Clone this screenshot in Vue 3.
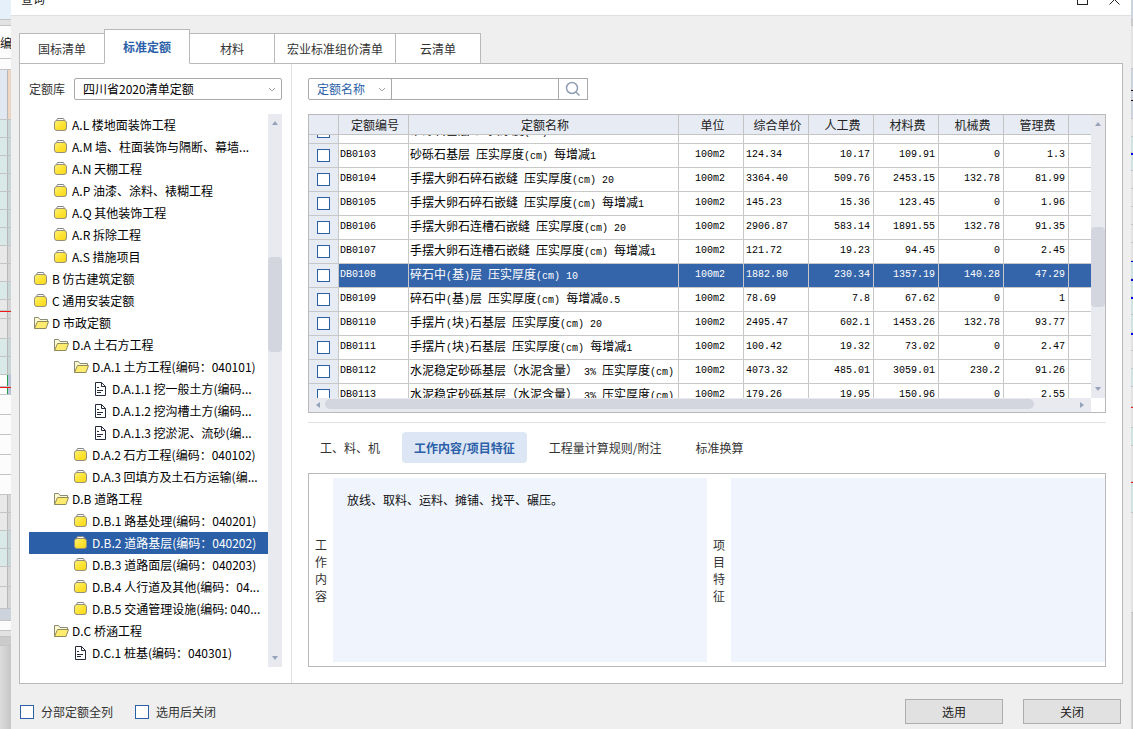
<script setup>
import { ref, onMounted } from 'vue'

const tabs = ['国标清单', '标准定额', '材料', '宏业标准组价清单', '云清单']
const activeTab = ref(1)

const tree = [
  { level: 1, icon: 'closed', text: 'A.L 楼地面装饰工程' },
  { level: 1, icon: 'closed', text: 'A.M 墙、柱面装饰与隔断、幕墙...' },
  { level: 1, icon: 'closed', text: 'A.N 天棚工程' },
  { level: 1, icon: 'closed', text: 'A.P 油漆、涂料、裱糊工程' },
  { level: 1, icon: 'closed', text: 'A.Q 其他装饰工程' },
  { level: 1, icon: 'closed', text: 'A.R 拆除工程' },
  { level: 1, icon: 'closed', text: 'A.S 措施项目' },
  { level: 0, icon: 'closed', text: 'B 仿古建筑定额' },
  { level: 0, icon: 'closed', text: 'C 通用安装定额' },
  { level: 0, icon: 'open', text: 'D 市政定额' },
  { level: 1, icon: 'open', text: 'D.A 土石方工程' },
  { level: 2, icon: 'open', text: 'D.A.1 土方工程(编码：040101)' },
  { level: 3, icon: 'doc', text: 'D.A.1.1 挖一般土方(编码...' },
  { level: 3, icon: 'doc', text: 'D.A.1.2 挖沟槽土方(编码...' },
  { level: 3, icon: 'doc', text: 'D.A.1.3 挖淤泥、流砂(编...' },
  { level: 2, icon: 'closed', text: 'D.A.2 石方工程(编码：040102)' },
  { level: 2, icon: 'closed', text: 'D.A.3 回填方及土石方运输(编...' },
  { level: 1, icon: 'open', text: 'D.B 道路工程' },
  { level: 2, icon: 'closed', text: 'D.B.1 路基处理(编码：040201)' },
  { level: 2, icon: 'closed', text: 'D.B.2 道路基层(编码：040202)' },
  { level: 2, icon: 'closed', text: 'D.B.3 道路面层(编码：040203)' },
  { level: 2, icon: 'closed', text: 'D.B.4 人行道及其他(编码：04...' },
  { level: 2, icon: 'closed', text: 'D.B.5 交通管理设施(编码: 040...' },
  { level: 1, icon: 'open', text: 'D.C 桥涵工程' },
  { level: 2, icon: 'doc', text: 'D.C.1 桩基(编码：040301)' },
]
const selectedNode = ref(19)

const heads = ['定额编号', '定额名称', '单位', '综合单价', '人工费', '材料费', '机械费', '管理费']
const rows = [
  ['DB0102', '砂砾石基层 压实厚度(cm) 20', '2456.20', '203.35', '2198.12', '0', '26'],
  ['DB0103', '砂砾石基层 压实厚度(cm) 每增减1', '124.34', '10.17', '109.91', '0', '1.3'],
  ['DB0104', '手摆大卵石碎石嵌缝 压实厚度(cm) 20', '3364.40', '509.76', '2453.15', '132.78', '81.99'],
  ['DB0105', '手摆大卵石碎石嵌缝 压实厚度(cm) 每增减1', '145.23', '15.36', '123.45', '0', '1.96'],
  ['DB0106', '手摆大卵石连槽石嵌缝 压实厚度(cm) 20', '2906.87', '583.14', '1891.55', '132.78', '91.35'],
  ['DB0107', '手摆大卵石连槽石嵌缝 压实厚度(cm) 每增减1', '121.72', '19.23', '94.45', '0', '2.45'],
  ['DB0108', '碎石中(基)层 压实厚度(cm) 10', '1882.80', '230.34', '1357.19', '140.28', '47.29'],
  ['DB0109', '碎石中(基)层 压实厚度(cm) 每增减0.5', '78.69', '7.8', '67.62', '0', '1'],
  ['DB0110', '手摆片(块)石基层 压实厚度(cm) 20', '2495.47', '602.1', '1453.26', '132.78', '93.77'],
  ['DB0111', '手摆片(块)石基层 压实厚度(cm) 每增减1', '100.42', '19.32', '73.02', '0', '2.47'],
  ['DB0112', '水泥稳定砂砾基层（水泥含量） 3% 压实厚度(cm)', '4073.32', '485.01', '3059.01', '230.2', '91.26'],
  ['DB0113', '水泥稳定砂砾基层（水泥含量） 3% 压实厚度(cm)', '179.26', '19.95', '150.96', '0', '2.55'],
]
const selectedRow = ref(6)

// Splits a name into half-width and full-width runs so each gets its own face.
const runs = (s) => s.match(/[\x20-\x7e]+|[^\x20-\x7e]+/g).map((t) => ({ t, half: t.charCodeAt(0) < 127 }))

const subTabs = ['工、料、机', '工作内容/项目特征', '工程量计算规则/附注', '标准换算']
const activeSub = ref(1)
const workText = ref('放线、取料、运料、摊铺、找平、碾压。')

const scroller = ref(null)
onMounted(() => { scroller.value.scrollTop = 15 })

// Slices of the workbook window visible on either side of the dialog.
const leftEdge = [
  [20, 'ribbon'], [6, 'dim'], [33, 'caption'], [11, 'white'], [50, 'head'],
  ...Array(7).fill([18, 'teal']), [18, 'grey'], [18, 'grey'], [18, 'teal'], [11, 'grey'], [1, 'red'], [7, 'grey'], [20, 'grey'],
  [18, 'teal'], [18, 'teal'], [12, 'cell'], [1, 'red'], [7, 'cell'],
  ...Array(5).fill([20, 'white']), [18, 'grey'], [18, 'grey'], [18, 'teal'], [18, 'teal'], [20, 'grey'], [22, 'grey'],
  [12, 'bar'], [10, 'white'], [6, 'dim'], [9, 'dark'], [84, 'foot'],
]
const rightEdge = [
  [20, 'bar'], [6, 'dark'], [43, 'dim'], [21, 'bar'], [1, 'ink'], [9, 'bar'], [1, 'ink'], [18, 'bar'], [18, 'dim'], [16, 'teal'],
  [2, 'blue'], [16, 'teal'], ...Array(5).fill([18, 'dim']), [1, 'blue'], [17, 'teal'], [2, 'blue'], [16, 'teal'], [2, 'blue'], [16, 'teal'],
  [18, 'teal'], [2, 'blue'], [16, 'dim'], [18, 'dim'], [18, 'teal'], [20, 'dim'], [1, 'red'], [20, 'dim'], [18, 'teal'],
  [36, 'dim'], [1, 'red'], [30, 'teal'], [100, 'dim'], [120, 'foot'],
]
</script>

<template>
  <div class="desktop">
    <div class="edge left">
      <div v-for="(s, i) in leftEdge" :key="i" :class="['slice', s[1]]" :style="{ height: s[0] + 'px' }">
        <span v-if="s[1] === 'caption'">编制</span>
      </div>
    </div>

    <section class="dialog">
      <header class="titlebar">
        <div class="title-row">
          <span>查询</span>
          <div class="win-buttons">
            <button aria-label="最大化"><svg width="13" height="13" viewBox="0 0 13 13"><rect x="1.500" y="1.500" width="10" height="10" /></svg></button>
            <button aria-label="关闭窗口"><svg width="13" height="13" viewBox="0 0 13 13"><path d="M1.500 1.500l10 10M11.500 1.500l-10 10" /></svg></button>
          </div>
        </div>
      </header>

      <nav class="tabs">
        <button v-for="(t, i) in tabs" :key="t" :class="{ active: i === activeTab }" @click="activeTab = i">{{ t }}</button>
      </nav>

      <main class="panel">
        <aside class="side">
          <div class="lib">
            <label for="lib">定额库</label>
            <div class="select">
              <select id="lib"><option>四川省2020清单定额</option></select>
              <svg width="8" height="5" viewBox="0 0 8 5"><path d="M1 1l3 3 3-3" /></svg>
            </div>
          </div>
          <div class="tree-box">
            <ul class="tree">
              <li v-for="(n, i) in tree" :key="i" :class="['lv' + n.level, { selected: i === selectedNode }]" @click="selectedNode = i">
                <svg v-if="n.icon === 'closed'" class="ico" width="18" height="16" viewBox="0 0 18 16">
                  <defs>
                    <linearGradient id="fold" x1="0" y1="0" x2="1" y2="1">
                      <stop offset="0" stop-color="#fff27c" /><stop offset="0.500" stop-color="#ffe435" /><stop offset="1" stop-color="#f7d61c" />
                    </linearGradient>
                  </defs>
                  <path d="M2.500 3.500l1-2h6l1 2" fill="#fff" stroke="#85858a" />
                  <rect x="0.500" y="3.500" width="12" height="10" rx="2.500" fill="url(#fold)" stroke="#94907a" />
                </svg>
                <svg v-else-if="n.icon === 'open'" class="ico" width="18" height="16" viewBox="0 0 18 16">
                  <path d="M0.500 13.500v-11h4l1.500 2h7.500v2" fill="#fffbd0" stroke="#8a8a78" />
                  <path d="M0.500 13.500l3-7h11l-2.500 7z" fill="#ffeb6e" stroke="#8f8a5c" />
                </svg>
                <svg v-else class="ico" width="18" height="16" viewBox="0 0 18 16">
                  <path d="M1.500 1.500h6l4 4v9h-10z" fill="#fff" stroke="#262b3b" />
                  <path d="M7.500 1.500v4h4" fill="none" stroke="#262b3b" />
                  <path d="M3 6.500h2M3 9.500h6M3 11.500h4" stroke="#262b3b" />
                </svg>
                <span>{{ n.text }}</span>
              </li>
            </ul>
            <div class="vbar">
              <svg width="6" height="4" viewBox="0 0 6 4"><path d="M0 4l3-4 3 4z" /></svg>
              <div class="thumb tree-thumb"></div>
              <svg width="6" height="4" viewBox="0 0 6 4"><path d="M0 0l3 4 3-4z" /></svg>
            </div>
          </div>
        </aside>

        <div class="content">
          <form class="search" @submit.prevent>
            <div class="select field">
              <select aria-label="查询字段"><option>定额名称</option></select>
              <svg width="8" height="5" viewBox="0 0 8 5"><path d="M1 1l3 3 3-3" /></svg>
            </div>
            <input type="text" aria-label="关键字" />
            <button aria-label="搜索">
              <svg width="16" height="16" viewBox="0 0 16 16"><circle cx="7" cy="7" r="5.500" /><path d="M11 11l3.500 3.500" /></svg>
            </button>
          </form>

          <div class="grid">
            <div ref="scroller" class="scroller">
              <table>
                <colgroup>
                  <col class="c-check" /><col class="c-code" /><col class="c-name" />
                  <col v-for="k in 6" :key="k" class="c-num" /><col />
                </colgroup>
                <thead>
                  <tr><th></th><th v-for="h in heads" :key="h">{{ h }}</th><th></th></tr>
                </thead>
                <tbody>
                  <tr v-for="(r, i) in rows" :key="r[0]" :class="{ selected: i === selectedRow }" @click="selectedRow = i">
                    <td class="check"><input type="checkbox" :aria-label="r[0]" /></td>
                    <td>{{ r[0] }}</td>
                    <td class="name"><span v-for="(p, k) in runs(r[1])" :key="k" :class="{ half: p.half }">{{ p.t }}</span></td>
                    <td class="mid">100m2</td>
                    <td>{{ r[2] }}</td>
                    <td v-for="k in 4" :key="k" class="num">{{ r[k + 2] }}</td>
                    <td></td>
                  </tr>
                </tbody>
              </table>
            </div>
            <div class="vbar">
              <svg width="6" height="4" viewBox="0 0 6 4"><path d="M0 4l3-4 3 4z" /></svg>
              <div class="thumb grid-thumb"></div>
              <svg width="6" height="4" viewBox="0 0 6 4"><path d="M0 0l3 4 3-4z" /></svg>
            </div>
            <div class="hbar">
              <svg width="4" height="6" viewBox="0 0 4 6"><path d="M4 0l-4 3 4 3z" /></svg>
              <div class="hthumb"></div>
              <svg width="4" height="6" viewBox="0 0 4 6"><path d="M0 0l4 3-4 3z" /></svg>
            </div>
          </div>

          <nav class="subtabs">
            <button v-for="(t, i) in subTabs" :key="t" :class="{ active: i === activeSub }" @click="activeSub = i">{{ t }}</button>
          </nav>

          <div class="detail">
            <label for="work">工作内容</label>
            <textarea id="work" v-model="workText" readonly></textarea>
            <label for="feature">项目特征</label>
            <textarea id="feature" readonly></textarea>
          </div>
        </div>
      </main>

      <footer class="footer">
        <label><input type="checkbox" />分部定额全列</label>
        <label><input type="checkbox" />选用后关闭</label>
        <div class="actions">
          <button>选用</button>
          <button>关闭</button>
        </div>
      </footer>
    </section>

    <div class="edge right">
      <div v-for="(s, i) in rightEdge" :key="i" :class="['slice', s[1]]" :style="{ height: s[0] + 'px' }"></div>
    </div>
  </div>
</template>

<style>
body { overflow: hidden; }
</style>

<style scoped>
* { box-sizing: border-box; }
.desktop {
  display: grid;
  grid-template-columns: 11px 1fr 2px;
  height: 100vh;
  overflow: hidden;
  font: 12px/16px "Noto Sans CJK SC", sans-serif;
  color: #1a1a1a;
}
button, select, input, textarea { font: inherit; color: inherit; margin: 0; padding: 0; border-radius: 0; }

.edge { overflow: hidden; }
.slice { border-bottom: 1px solid #c4c4c4; overflow: hidden; white-space: nowrap; }
.left { background: #d9d9d9; }
.ribbon { background: #e6f0fa; }
.dim { background: #e2e2e2; }
.white, .caption { background: #fcfcfc; }
.caption { line-height: 34px; color: #111; }
.head { background: linear-gradient(90deg, #e2e8f1 7px, #b7b7b7 7px, #b7b7b7 8px, #ecd5c2 8px); }
.teal { background: linear-gradient(90deg, #d9e9e7 7px, #b7b7b7 7px, #b7b7b7 8px, #c8d7d5 8px); }
.grey { background: linear-gradient(90deg, #e9e8e8 7px, #b7b7b7 7px, #b7b7b7 8px, #d6d5d5 8px); }
.cell { background: linear-gradient(90deg, #fff 7px, #22a049 7px, #22a049 8px, #b9c3d9 8px); }
.bar { background: #cdd3dd; }
.dark { background: #cbcbcb; }
.foot { background: linear-gradient(90deg, #dcdcdc, #c6c6c6); }
.red { background: #f01818; border: 0; }
.blue { background: #0000e6; border: 0; }
.ink { background: #111; border: 0; }
.right .teal { background: #cfe4e2; }

.dialog { display: flex; flex-direction: column; min-width: 0; min-height: 0; background: #efefef; }
.titlebar {
  flex: none;
  display: flex;
  align-items: flex-end;
  height: 16px;
  overflow: hidden;
  background: #fff;
  border-bottom: 1px solid #e0e0e0;
}
.title-row { display: flex; align-items: center; justify-content: space-between; width: 100%; height: 32px; padding: 0 10px; }
.win-buttons { display: flex; gap: 19px; }
.win-buttons button { display: flex; border: 0; background: none; }
.win-buttons svg { fill: none; stroke: #222; }

.tabs { flex: none; display: flex; align-items: flex-end; height: 47px; padding-left: 8px; }
.tabs button {
  min-width: 86px;
  height: 31px;
  margin: 0 -1px -1px 0;
  padding: 0 12px;
  border: 1px solid #b9b9b9;
  background: #fff;
  color: #333;
}
.tabs button.active { position: relative; height: 35px; border-bottom-color: #fff; color: #2b5fa8; font-weight: bold; }

.panel { flex: 1; display: flex; min-height: 0; margin: 0 8px; border: 1px solid #b9b9b9; background: #fff; }
.side { flex: none; display: flex; flex-direction: column; width: 272px; padding: 14px 9px 16px; border-right: 1px solid #e1e1e1; }
.lib { flex: none; display: flex; align-items: center; gap: 9px; margin-bottom: 14px; color: #333; }
.select { flex: 1; position: relative; height: 22px; }
.select select {
  width: 100%;
  height: 22px;
  padding: 0 8px;
  border: 1px solid #a9a9a9;
  border-radius: 2px;
  background: #fff;
  color: #000;
  appearance: none;
}
.select svg { position: absolute; right: 6px; top: 9px; fill: none; stroke: #a3a3a3; }

.tree-box { flex: 1; display: flex; min-height: 0; }
.tree { flex: 1; min-width: 0; margin: 0; padding: 0; overflow: hidden; list-style: none; color: #000; }
.tree li { display: flex; align-items: center; height: 22px; white-space: nowrap; }
.tree li.selected { background: #2b5fa8; color: #fff; }
.ico { flex: none; }
.lv0 { padding-left: 5px; }
.lv1 { padding-left: 25px; }
.lv2 { padding-left: 45px; }
.lv3 { padding-left: 65px; }

.vbar { flex: none; display: flex; flex-direction: column; align-items: center; width: 14px; padding: 7px 0; background: #e8eaf0; }
.vbar svg, .hbar svg { flex: none; fill: #98a3ba; }
.thumb { width: 14px; margin-bottom: auto; border-radius: 4px; background: #d3d6de; }
.tree-thumb { height: 95px; margin-top: 132px; }
.grid-thumb { height: 80px; margin-top: 101px; }

.content { flex: 1; display: flex; flex-direction: column; min-width: 0; padding: 14px 16px 16px; }
.search { flex: none; display: flex; margin-bottom: 14px; }
.select.field { flex: none; width: 84px; }
.field select { color: #2b5fa8; }
.search input { width: 168px; height: 22px; margin-left: -1px; border: 1px solid #a9a9a9; }
.search button {
  display: flex;
  align-items: center;
  justify-content: center;
  width: 30px;
  height: 22px;
  margin-left: -1px;
  border: 1px solid #a9a9a9;
  background: #fff;
}
.search button svg { fill: none; stroke: #8f9db5; stroke-width: 1.500; }

.grid { flex: none; display: grid; grid-template: 283px 14px / 1fr 14px; border: 1px solid #b9b9b9; }
.scroller { overflow: hidden; }
table { width: 100%; table-layout: fixed; border-spacing: 0; }
.c-check { width: 30px; }
.c-code { width: 70px; }
.c-name { width: 270px; }
.c-num { width: 65px; }
th {
  position: sticky;
  top: 0;
  z-index: 1;
  height: 20px;
  padding: 0 0 0 3px;
  border: 0 solid #c4c4c4;
  border-width: 0 1px 1px 0;
  background: #e7ebf3;
  color: #222;
  font-weight: normal;
}
td {
  height: 24px;
  padding: 0 3px 2px 1px;
  border: 0 solid #c8c8c8;
  border-width: 0 1px 1px 0;
  overflow: hidden;
  white-space: nowrap;
  color: #000;
  font: 10px/16px "Liberation Mono", monospace;
}
td:nth-child(5) { padding-left: 2px; }
th:last-child, td:last-child { border-right: 0; }
td.name { font: 12px/16px "Noto Sans CJK SC", sans-serif; }
.half { white-space: pre; font: 10px/12px "Liberation Mono", monospace; }
td.mid { text-align: center; }
td.num { text-align: right; }
tr.selected td { background: #3464aa; color: #fff; }
td.check, tr.selected td.check { padding: 0; background: #e7ebf3; text-align: center; }
.check input, .footer input { appearance: none; width: 13px; height: 13px; border: 1px solid #2b5fa8; background: #fff; }
.check input { display: block; margin: 0 auto; }
.hbar { display: flex; align-items: center; justify-content: space-between; padding: 0 7px; background: #e8eaf0; }
.hthumb { flex: none; width: 709px; height: 10px; margin: 0 auto 2px 5px; border-radius: 5px; background: #d3d6de; }

.subtabs { flex: none; display: flex; gap: 10px; margin: 9px 0 10px; padding-top: 9px; border-top: 1px solid #e1e1e1; }
.subtabs button { height: 31px; padding: 0 12px; border: 0; border-radius: 4px; background: none; color: #333; }
.subtabs button.active { background: #dde6f4; color: #2b5fa8; font-weight: bold; }

.detail { flex: 1; display: grid; grid-template-columns: 24px 1fr 24px 1fr; min-height: 0; padding: 4px 0; border: 1px solid #b9b9b9; }
.detail label { align-self: center; justify-self: center; width: 12px; line-height: 17px; color: #333; word-break: break-all; }
.detail textarea { display: block; width: 100%; height: 100%; padding: 14px; border: 0; outline: 0; resize: none; background: #f0f5fd; color: #111; }

.footer { flex: none; display: flex; align-items: center; gap: 22px; height: 45px; padding: 10px 10px 0 9px; color: #333; }
.footer label { display: flex; align-items: center; gap: 7px; }
.footer input { width: 14px; height: 14px; }
.actions { display: flex; gap: 20px; margin-left: auto; }
.actions button { width: 98px; height: 25px; border: 1px solid #adadad; background: #e1e1e1; color: #222; }
</style>
